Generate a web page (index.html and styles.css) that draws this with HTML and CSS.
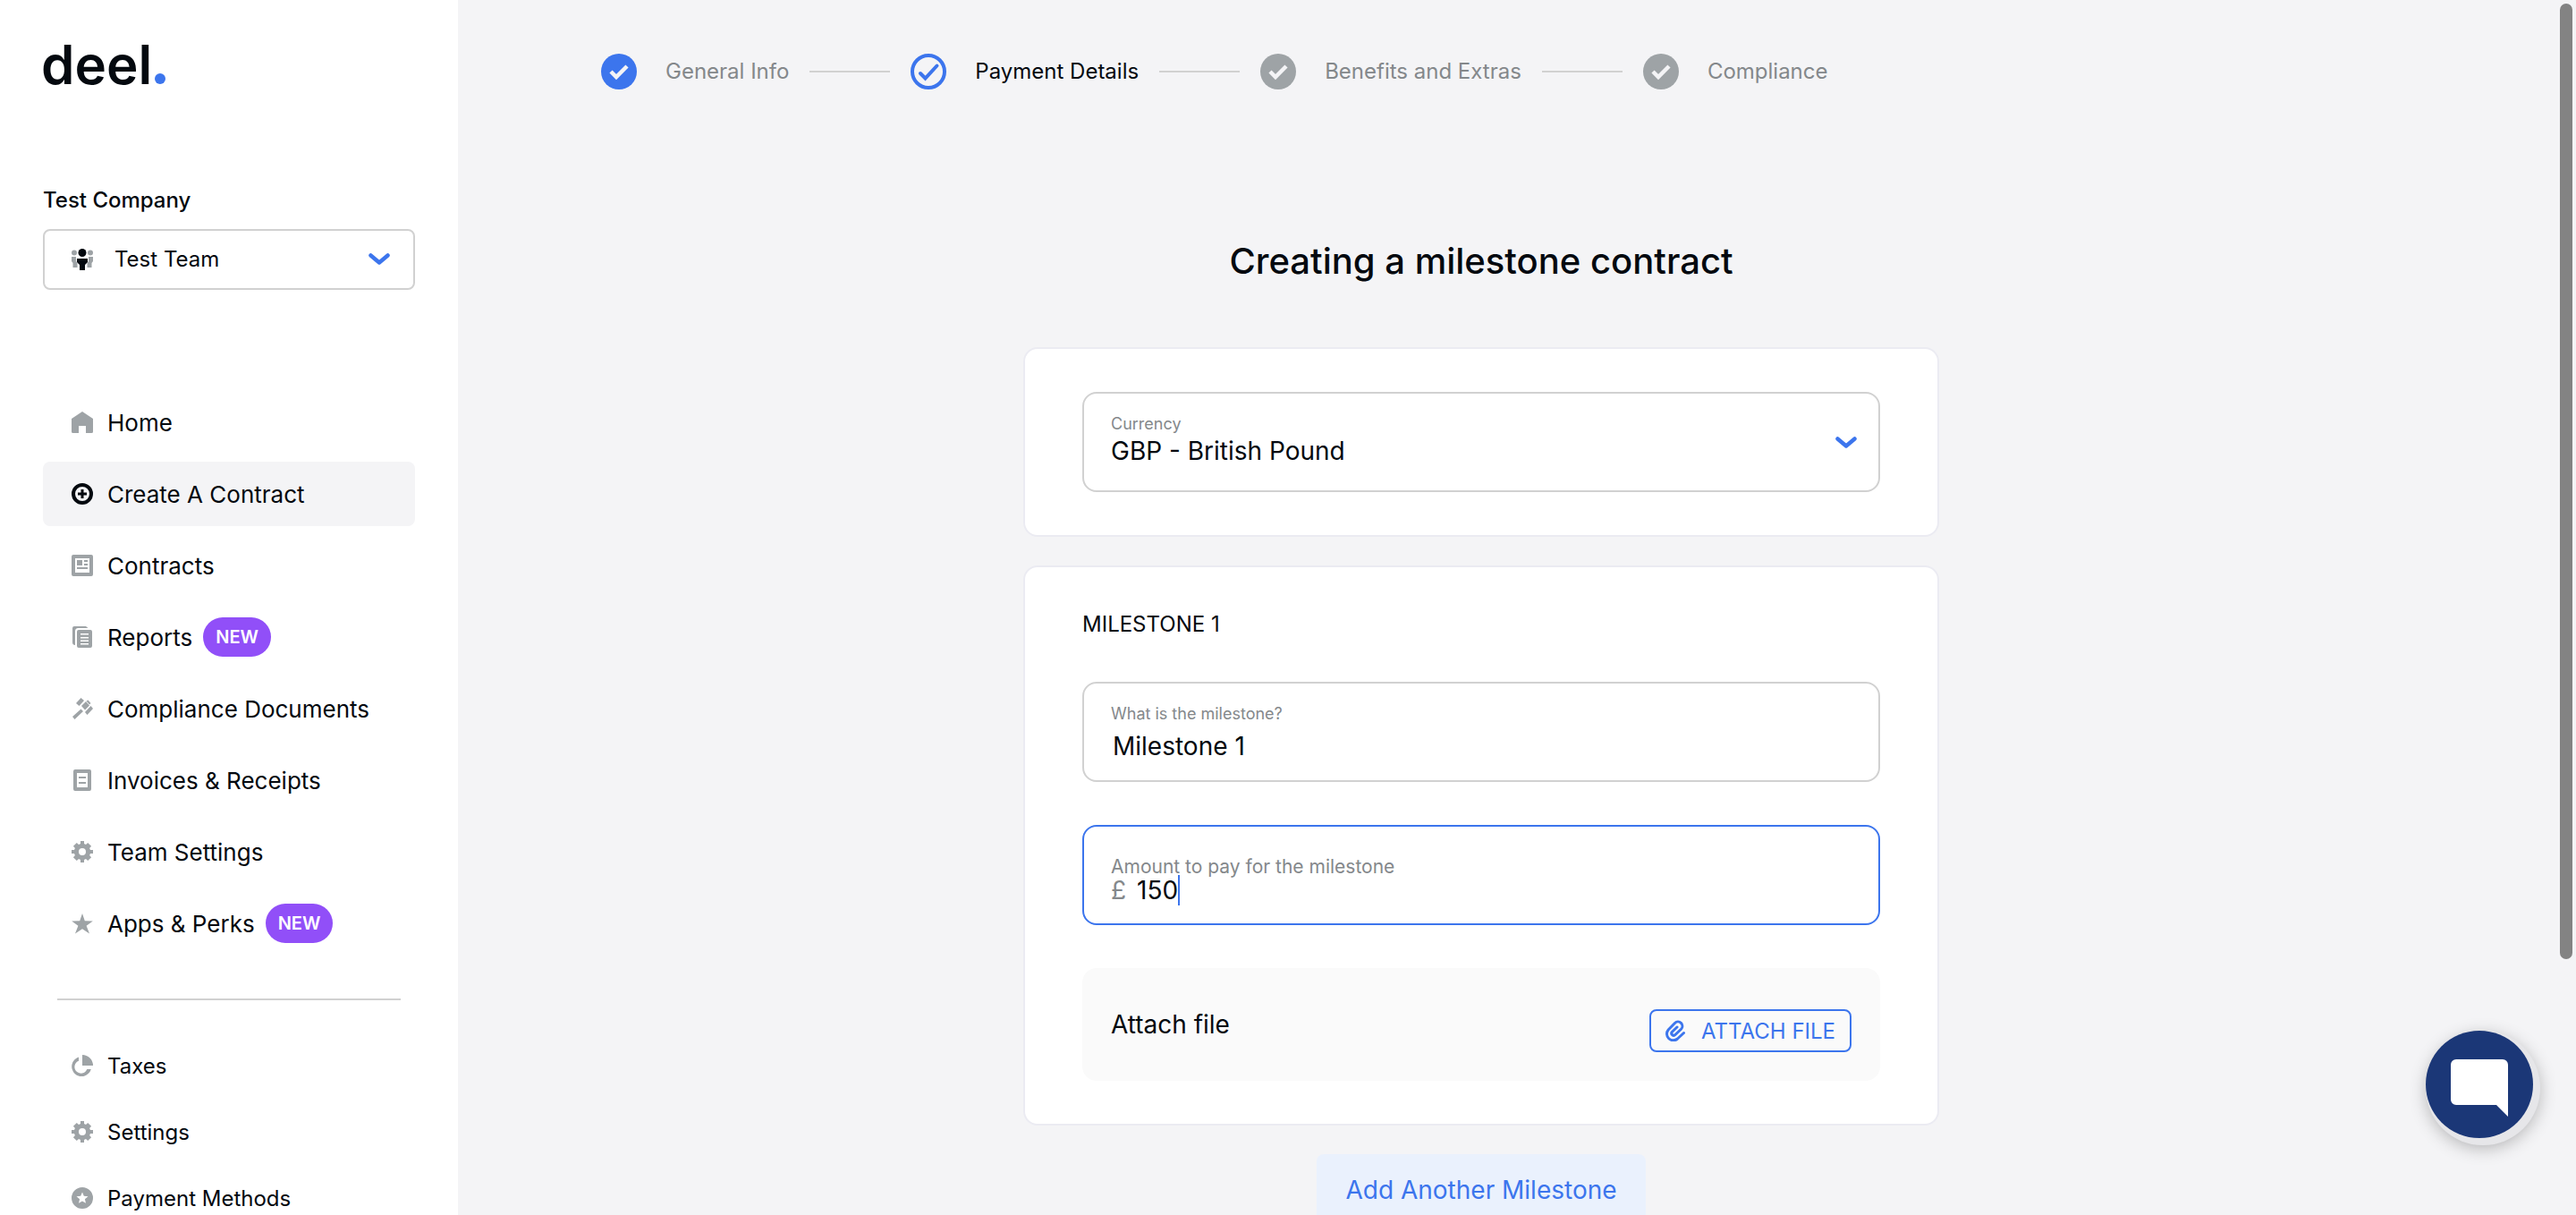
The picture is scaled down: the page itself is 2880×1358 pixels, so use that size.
FILE: index.html
```html
<!DOCTYPE html>
<html lang="en">
<head>
<meta charset="utf-8">
<title>Creating a milestone contract</title>
<link rel="stylesheet" href="styles.css">
</head>
<body>
<svg class="sprite" aria-hidden="true">
  <symbol id="i-gear" viewBox="0 0 24 24"><path fill-rule="evenodd" d="M10 0h4v3l2 .9 2.200-2 3.900 3.900-2 2.200.9 2h3v4h-3l-.9 2 2 2.200-3.900 3.900-2.200-2-2 .9v3h-4v-3l-2-.9-2.200 2-3.900-3.900 2-2.200-.9-2H0v-4h3l.9-2-2-2.200 3.900-3.900 2.200 2 2-.9zM12 8a4 4 0 1 0 0 8 4 4 0 0 0 0-8z"/></symbol>
  <symbol id="i-chevron" viewBox="0 0 24 14"><path d="M2.500 2.500 12 10.500l9.500-8" fill="none" stroke="currentColor" stroke-width="4.500" stroke-linecap="round" stroke-linejoin="round"/></symbol>
  <symbol id="i-step" viewBox="0 0 40 40"><circle cx="20" cy="20" r="20"/><path d="m11 20 6 6 12-12" fill="none" stroke="#f4f4f6" stroke-width="4.500"/></symbol>
</svg>
<div class="app">
  <aside class="sidebar">
    <a class="logo" href="#" aria-label="deel."><span>deel</span><span class="logo-dot"></span></a>
    <label class="company" for="team">Test Company</label>
    <div class="team">
      <svg class="icon" viewBox="0 0 24 24"><g fill="#9ea3a6"><circle cx="3" cy="4.500" r="3"/><circle cx="21" cy="4.500" r="3"/><path d="M0 9h5v5l1.500 2v5H1.500v-5L0 14zM24 9h-5v5l-1.500 2v5h5v-5l1.500-2z"/></g><g fill="#04090f"><circle cx="12" cy="4.500" r="4.500"/><path d="M6 11h12v4l-3 3v6H9v-6l-3-3z"/></g></svg>
      <select id="team"><option>Test Team</option></select>
      <svg class="chevron"><use href="#i-chevron"/></svg>
    </div>
    <nav class="nav">
      <a href="#"><svg class="icon" viewBox="0 0 24 24"><path d="M12 0 24 8v14.500a1.500 1.500 0 0 1-1.500 1.500H16v-8H8v8H1.500A1.500 1.500 0 0 1 0 22.500V8z"/></svg>Home</a>
      <a href="#" class="active"><svg class="icon" viewBox="0 0 24 24"><g fill="none" stroke="#04090f"><circle cx="12" cy="12" r="10" stroke-width="4"/><path d="M12 7v10M7 12h10" stroke-width="3"/></g></svg>Create A Contract</a>
      <a href="#"><svg class="icon" viewBox="0 0 24 24"><path fill-rule="evenodd" d="M2 0h20a2 2 0 0 1 2 2v20a2 2 0 0 1-2 2H2a2 2 0 0 1-2-2V2a2 2 0 0 1 2-2zm2 4v16h16V4zM6 6h6v6H6zm8 0h4v2h-4zm0 4h4v2h-4zm-8 4h12v2H6z"/></svg>Contracts</a>
      <a href="#"><svg class="icon" viewBox="0 0 24 24"><path fill-rule="evenodd" d="M3 0h13l2.500 2H7.500A3.500 3.500 0 0 0 4 5.500V21a3 3 0 0 1-3-3V2a2 2 0 0 1 2-2zM8 4h13a2 2 0 0 1 2 2v16a2 2 0 0 1-2 2H8a2 2 0 0 1-2-2V6a2 2 0 0 1 2-2zm2 4v1.500h9V8zm0 4v1.500h9V12zm0 3.500V17h9v-1.500zm0 3.500v1.500h9V19z"/></svg>Reports<span class="badge">New</span></a>
      <a href="#"><svg class="icon" viewBox="0 0 24 24"><path d="m5 6 5.500-6L14 3 8.500 9zM15 16l6.500-7L24 12l-6.500 7zM11 9l5-5 4 4.500-5 5zM16.500 3.500l2-1L21.500 6 20 7.500zM1 21l9.500-8.500L13 15l-9.500 9z"/></svg>Compliance Documents</a>
      <a href="#"><svg class="icon" viewBox="0 0 24 24"><path fill-rule="evenodd" d="M4 0h16a2 2 0 0 1 2 2v20a2 2 0 0 1-2 2H4a2 2 0 0 1-2-2V2a2 2 0 0 1 2-2zm2 4v16h12V4zm2 4h8v2H8zm0 6h8v2H8z"/></svg>Invoices &amp; Receipts</a>
      <a href="#"><svg class="icon"><use href="#i-gear"/></svg>Team Settings</a>
      <a href="#"><svg class="icon" viewBox="0 0 24 24"><path d="m12 1 2.800 8.300 9 .1-7.200 5.300L20 23.500l-8-5.200-8 5.200 3.400-8.800L.2 9.400l9-.1z"/></svg>Apps &amp; Perks<span class="badge">New</span></a>
    </nav>
    <hr class="divider">
    <nav class="nav nav-small">
      <a href="#"><svg class="icon" viewBox="0 0 24 24"><path d="M12 0a12 12 0 0 1 12 12H12zM8 2.500v4.200A7.200 7.200 0 1 0 17.300 16h4.500A11 11 0 1 1 8 2.500z"/></svg>Taxes</a>
      <a href="#"><svg class="icon"><use href="#i-gear"/></svg>Settings</a>
      <a href="#"><svg class="icon" viewBox="0 0 24 24"><path fill-rule="evenodd" d="M12 0a12 12 0 1 0 0 24 12 12 0 0 0 0-24zm0 5.500 1.800 4.300 4.700.4-3.600 3 1.100 4.600-4-2.400-4 2.400 1.100-4.600-3.600-3 4.700-.4z"/></svg>Payment Methods</a>
    </nav>
  </aside>
  <main class="main">
    <ol class="steps">
      <li class="done"><svg class="step-icon"><use href="#i-step"/></svg>General Info</li>
      <li class="current"><svg class="step-icon" viewBox="0 0 40 40"><g fill="none" stroke="currentColor" stroke-width="4"><circle cx="20" cy="20" r="18"/><path d="m11 22 5.500 5.500L29.500 13.500" stroke-linecap="round"/></g></svg><span>Payment Details</span></li>
      <li><svg class="step-icon"><use href="#i-step"/></svg>Benefits and Extras</li>
      <li><svg class="step-icon"><use href="#i-step"/></svg>Compliance</li>
    </ol>
    <form class="form">
      <h1>Creating a milestone contract</h1>
      <section class="card">
        <div class="field field-select">
          <label for="currency">Currency</label>
          <select id="currency"><option>GBP - British Pound</option></select>
          <svg class="chevron"><use href="#i-chevron"/></svg>
        </div>
      </section>
      <section class="card">
        <h2>MILESTONE 1</h2>
        <div class="field">
          <label for="name">What is the milestone?</label>
          <input id="name" type="text" value="Milestone 1">
        </div>
        <div class="field field-amount">
          <label for="amount">Amount to pay for the milestone</label>
          <div class="amount"><span class="unit">£</span><input id="amount" type="text" value="150"><span class="caret"></span></div>
        </div>
        <div class="attach">
          <span>Attach file</span>
          <button type="button" class="attach-button"><svg class="clip" viewBox="0 0 22 24"><path d="M20.500 14.500 13.500 21A7.200 7.200 0 0 1 3.200 11L10.500 3.500a4.800 4.800 0 0 1 7 6.800L11 16.500a2.300 2.300 0 0 1-3.500-3.300L13 8" fill="none" stroke="currentColor" stroke-width="3" stroke-linecap="round"/></svg>ATTACH FILE</button>
        </div>
      </section>
      <button type="button" class="add">Add Another Milestone</button>
    </form>
  </main>
</div>
<button type="button" class="chat" aria-label="Open chat"><svg viewBox="0 0 64 64"><path d="M6 0h52a6 6 0 0 1 6 6v58L51 51H6a6 6 0 0 1-6-6V6a6 6 0 0 1 6-6z" fill="#fff"/></svg></button>
<div class="scroll-thumb"></div>
</body>
</html>
```
FILE: styles.css
```css
* { box-sizing: border-box; }
body {
  margin: 0;
  background: #f4f4f6;
  color: #04090f;
  font-family: Inter, "Liberation Sans", sans-serif;
  font-size: 24px;
  font-optical-sizing: none;
  overflow: hidden;
}
a { color: inherit; text-decoration: none; }
select, input, button { font: inherit; color: inherit; font-optical-sizing: none; }
select, input {
  appearance: none;
  border: 0;
  padding: 0;
  margin: 0;
  background: none;
  outline: 0;
}
.sprite { display: none; }
.app { display: flex; height: 100vh; }

/* Sidebar */
.sidebar {
  flex: 0 0 512px;
  display: flex;
  flex-direction: column;
  padding: 36px 48px 0;
  background: #fff;
  overflow: hidden;
}
.logo {
  display: flex;
  align-items: baseline;
  gap: 3px;
  margin-left: -2px;
  font-size: 60px;
  font-weight: 600;
  line-height: 72px;
}
.logo-dot { width: 12px; height: 12px; border-radius: 50%; background: #3c75ed; }
.company { margin-top: 100px; font-weight: 500; line-height: 32px; }
.team {
  flex: none;
  display: flex;
  align-items: center;
  gap: 24px;
  height: 68px;
  margin-top: 16px;
  padding: 0 26px 0 30px;
  border: 2px solid #d1d1d1;
  border-radius: 8px;
}
.team select { flex: 1; min-width: 0; line-height: 32px; }
.icon { flex: none; width: 24px; height: 24px; fill: #9ea3a6; }
.chevron { flex: none; width: 24px; height: 14px; color: #3c75ed; }
.nav { display: flex; flex-direction: column; gap: 8px; margin-top: 112px; font-size: 26px; }
.nav a {
  flex: none;
  display: flex;
  align-items: center;
  gap: 16px;
  height: 72px;
  padding: 0 32px;
  border-radius: 8px;
  white-space: nowrap;
}
.nav .active { background: #f4f4f6; }
.badge {
  margin-left: -4px;
  padding: 0 14px;
  border-radius: 22px;
  background: #914ff8;
  color: #fff;
  font-size: 20px;
  font-weight: 600;
  line-height: 44px;
  text-transform: uppercase;
}
.divider { flex: none; height: 2px; margin: 48px 16px 0; border: 0; background: #d1d1d1; }
.nav-small { gap: 2px; margin-top: 37px; font-size: 24px; }

/* Progress steps */
.main { flex: 1; padding: 60px 240px 0 160px; overflow: hidden; }
.steps { display: flex; margin: 0; padding: 0; list-style: none; color: #84888b; line-height: 40px; }
.steps li { display: flex; align-items: center; gap: 32px; white-space: nowrap; }
.steps li:not(:last-child)::after {
  content: "";
  width: 90px;
  height: 2px;
  margin: 0 23px 0 -9px;
  background: #d1d1d1;
}
.step-icon { width: 40px; height: 40px; color: #3c75ed; fill: #9ea3a6; }
.done .step-icon { fill: #3c75ed; }
.current { color: #04090f; }

/* Form */
.form { display: flex; flex-direction: column; align-items: center; gap: 32px; margin-top: 168px; }
h1 { margin: 0 0 40px; font-size: 40px; font-weight: 500; line-height: 48px; }
.card {
  width: 100%;
  max-width: 1024px;
  padding: 48px 64px;
  border: 2px solid #ebebf2;
  border-radius: 16px;
  background: #fff;
}
h2 { margin: 0 0 48px; font-size: 24px; font-weight: 400; line-height: 32px; }
.field {
  position: relative;
  display: flex;
  flex-direction: column;
  gap: 8px;
  height: 112px;
  margin-bottom: 48px;
  padding: 22px 30px 0;
  border: 2px solid #d1d1d1;
  border-radius: 16px;
  font-size: 28px;
}
.field:last-child { margin-bottom: 0; }
.field label { color: #84888b; font-size: 18px; line-height: 24px; }
.field input, .field select { line-height: 32px; height: 32px; }
.field input { padding-left: 2px; }
.field-select { gap: 2px; }
.field .chevron { position: absolute; right: 24px; top: 48px; }
.field-amount { gap: 0; padding-top: 36px; border-color: #3c75ed; }
.field-amount label { font-size: 21px; line-height: 18px; }
.amount { display: flex; align-items: center; }
.unit { margin-right: 10px; color: #84888b; }
.amount input { field-sizing: content; }
.caret { width: 2px; height: 34px; background: #3c75ed; }
.attach {
  display: flex;
  align-items: center;
  justify-content: space-between;
  height: 126px;
  padding: 0 32px;
  border-radius: 16px;
  background: #fafafa;
  font-size: 28px;
}
.attach-button {
  display: flex;
  align-items: center;
  gap: 18px;
  height: 48px;
  margin-top: 14px;
  padding: 0 16px;
  border: 2px solid #3c75ed;
  border-radius: 8px;
  background: none;
  color: #3c75ed;
  font-size: 24px;
}
.clip { width: 22px; height: 24px; }
.add {
  flex: none;
  height: 80px;
  padding: 0 32px;
  border: 0;
  border-radius: 8px;
  background: #eaf1fd;
  color: #3c75ed;
  font-size: 28px;
}

/* Floating elements over the page */
.chat {
  position: fixed;
  right: 48px;
  bottom: 86px;
  width: 120px;
  height: 120px;
  padding: 28px;
  border: 0;
  border-radius: 50%;
  background: #1b3777;
  box-shadow: 4px 4px 0 4px #e6e6e9, 4px 8px 20px 2px rgba(0, 0, 0, .3);
}
.chat svg { display: block; width: 64px; height: 64px; margin-top: 4px; }
.scroll-thumb {
  position: fixed;
  top: 4px;
  right: 4px;
  width: 14px;
  height: 1068px;
  border-radius: 7px;
  background: #838383;
}
```
